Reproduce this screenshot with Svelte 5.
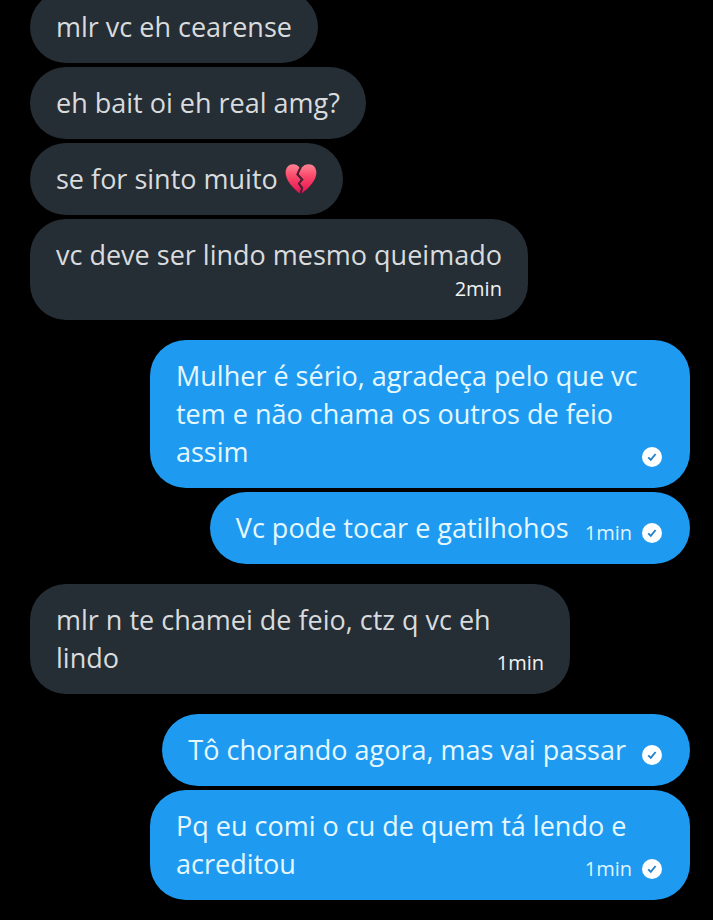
<script>
  // Messages grouped by sender, oldest first
  const groups = [
    {
      from: 'them',
      messages: [
        { text: 'mlr vc eh cearense' },
        { text: 'eh bait oi eh real amg?' },
        { text: 'se for sinto muito', brokenHeart: true },
        { text: 'vc deve ser lindo mesmo queimado', time: '2min', stacked: true }
      ]
    },
    {
      from: 'me',
      messages: [
        { text: 'Mulher é sério, agradeça pelo que vc tem e não chama os outros de feio assim' },
        { text: 'Vc pode tocar e gatilhohos', time: '1min' }
      ]
    },
    {
      from: 'them',
      messages: [{ text: 'mlr n te chamei de feio, ctz q vc eh lindo', time: '1min' }]
    },
    {
      from: 'me',
      messages: [
        { text: 'Tô chorando agora, mas vai passar' },
        { text: 'Pq eu comi o cu de quem tá lendo e acreditou', time: '1min' }
      ]
    }
  ];
</script>

<main class="chat">
  {#each groups as group}
    {@const mine = group.from === 'me'}
    <section class="group" class:mine>
      {#each group.messages as message}
        <div class="bubble" class:stacked={message.stacked}>
          <span class="text">{message.text}</span>
          {#if message.brokenHeart}
            <svg class="heart" viewBox="0 0 32 32" role="img" aria-label="Coração partido">
              <defs>
                <linearGradient id="heart-fill" x1="0" y1="0" x2="0" y2="1">
                  <stop offset="0" stop-color="#ff8594" />
                  <stop offset="0.4" stop-color="#fb4a6c" />
                  <stop offset="1" stop-color="#e5124f" />
                </linearGradient>
              </defs>
              <path
                d="M14.6 4.6C13 2.4 10.8 1.2 8.2 1.2C3.9 1.2 0.6 4.7 0.6 9.6C0.6 18 8.6 25.6 14.6 30.6L16 25.4L12.8 20.6L15.8 16.8L11.2 11.6Z"
                fill="url(#heart-fill)"
              />
              <path
                d="M16.8 4.6C18.4 2.4 21 1.2 23.8 1.2C28.1 1.2 31.4 4.7 31.4 9.6C31.4 18 23 25.8 16.6 30.6L18.2 24.6L15 20.6L18.6 16.4L13.6 11Z"
                fill="url(#heart-fill)"
              />
              <path
                d="M15.2 4.6L12.4 11.300L17.2 16.600L13.900 20.600L17 25L15.400 30.400"
                fill="none"
                stroke="#5c1734"
                stroke-width="1.4"
                stroke-linejoin="round"
              />
            </svg>
          {/if}
          {#if message.time || mine}
            <span class="meta">
              {#if message.time}
                <time>{message.time}</time>
              {/if}
              {#if mine}
                <svg class="check" viewBox="0 0 20 20" role="img" aria-label="Enviada">
                  <circle cx="10" cy="10" r="10" fill="#fff" />
                  <path
                    d="M6.2 10.3l2.6 2.6L13.6 7"
                    fill="none"
                    stroke="#2483c8"
                    stroke-width="1.9"
                  />
                </svg>
              {/if}
            </span>
          {/if}
        </div>
      {/each}
    </section>
  {/each}
</main>

<style>
  :global(body) {
    margin: 0;
    background: #000;
  }

  .chat {
    box-sizing: border-box;
    height: 100vh;
    padding: 0 23px 20px 30px;
    display: flex;
    flex-direction: column;
    justify-content: flex-end;
    gap: 20px;
    overflow: hidden;
    background: #000;
    font-family: 'Open Sans', 'Noto Sans', sans-serif;
  }

  .group {
    display: flex;
    flex-direction: column;
    align-items: flex-start;
    gap: 4px;
  }

  .group.mine {
    align-items: flex-end;
  }

  .bubble {
    box-sizing: border-box;
    display: flow-root;
    max-width: 540px;
    padding: 17px 26px;
    border-radius: 36px;
    background: #252e35;
    color: #d9dbdd;
    font-size: 27px;
    line-height: 38px;
  }

  .mine .bubble {
    background: #1e9bf0;
    color: #e6f8ff;
  }

  /* floats to the end of the last line of text */
  .meta {
    float: right;
    box-sizing: border-box;
    display: flex;
    align-items: center;
    gap: 10px;
    height: 38px;
    margin-left: 16px;
    padding-top: 9px;
    font-size: 20px;
    line-height: 28px;
    color: #f0f2f4;
  }

  .mine .meta {
    padding-right: 2px;
    color: #def4ff;
  }

  .stacked .meta {
    float: none;
    justify-content: flex-end;
    height: 29px;
    padding-top: 0;
  }

  .check {
    width: 20px;
    height: 20px;
  }

  .heart {
    width: 32px;
    height: 32px;
    vertical-align: -6px;
  }
</style>
